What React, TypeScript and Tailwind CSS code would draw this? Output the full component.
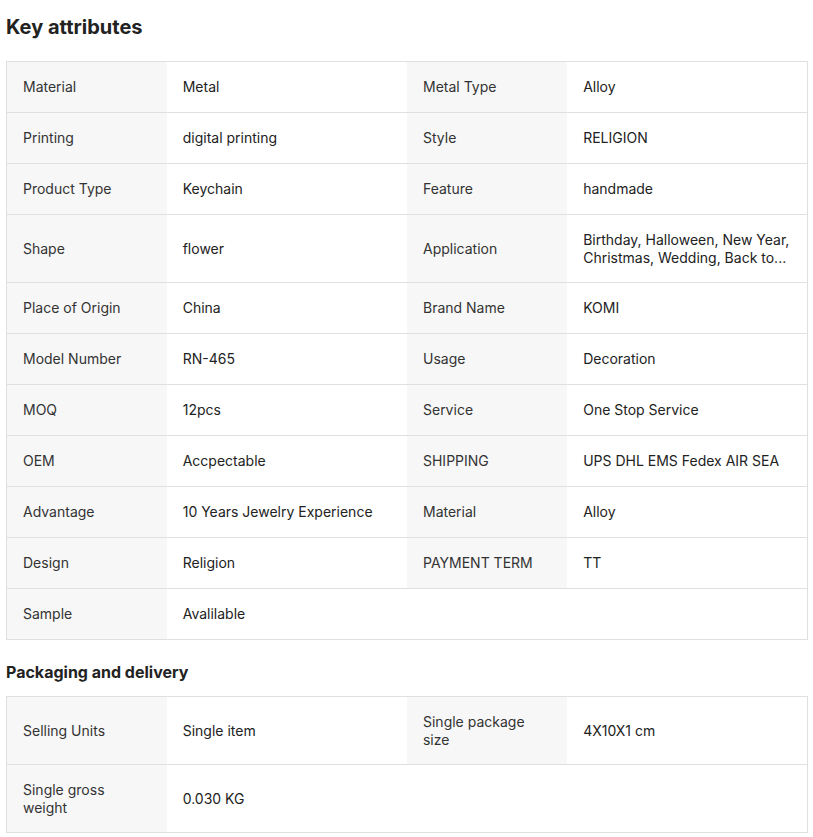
const keyAttributes: [string, string][] = [
  ["Material", "Metal"],
  ["Metal Type", "Alloy"],
  ["Printing", "digital printing"],
  ["Style", "RELIGION"],
  ["Product Type", "Keychain"],
  ["Feature", "handmade"],
  ["Shape", "flower"],
  ["Application", "Birthday, Halloween, New Year, Christmas, Wedding, Back to..."],
  ["Place of Origin", "China"],
  ["Brand Name", "KOMI"],
  ["Model Number", "RN-465"],
  ["Usage", "Decoration"],
  ["MOQ", "12pcs"],
  ["Service", "One Stop Service"],
  ["OEM", "Accpectable"],
  ["SHIPPING", "UPS DHL EMS Fedex AIR SEA"],
  ["Advantage", "10 Years Jewelry Experience"],
  ["Material", "Alloy"],
  ["Design", "Religion"],
  ["PAYMENT TERM", "TT"],
  ["Sample", "Avalilable"],
];

const packaging: [string, string][] = [
  ["Selling Units", "Single item"],
  ["Single package size", "4X10X1 cm"],
  ["Single gross weight", "0.030 KG"],
];

function pairs(list: [string, string][]) {
  const rows: [string, string][][] = [];
  for (let i = 0; i < list.length; i += 2) rows.push(list.slice(i, i + 2));
  return rows;
}

function AttrTable({ items }: { items: [string, string][] }) {
  return (
    <table className="w-full table-fixed border-collapse border border-[#e0e0e0] text-sm leading-[17.5px]">
      <colgroup>
        <col className="w-[20%]" />
        <col className="w-[30%]" />
        <col className="w-[20%]" />
        <col className="w-[30%]" />
      </colgroup>
      <tbody>
        {pairs(items).map((row, i) => (
          <tr key={i} className="border-b border-[#e0e0e0]">
            {row.map(([k, v], j) => [
              <td key={"k" + j} className="h-[51px] bg-[#f7f7f7] px-4 py-4 align-middle text-[#333]">
                {k}
              </td>,
              <td key={"v" + j} className="h-[51px] px-4 py-4 align-middle text-[#222]">
                {v}
              </td>,
            ])}
            {row.length === 1 && [<td key="e1" />, <td key="e2" />]}
          </tr>
        ))}
      </tbody>
    </table>
  );
}

export default function App() {
  return (
    <div className="w-[813px] bg-white pl-[6px] pr-[5px] pt-[13px] font-['Inter',sans-serif]">
      <h2 className="text-xl font-bold leading-7 text-[#222]">Key attributes</h2>
      <div className="mt-5">
        <AttrTable items={keyAttributes} />
      </div>
      <h3 className="mt-5 text-base font-bold leading-6 text-[#222]">Packaging and delivery</h3>
      <div className="mt-3">
        <AttrTable items={packaging} />
      </div>
    </div>
  );
}
